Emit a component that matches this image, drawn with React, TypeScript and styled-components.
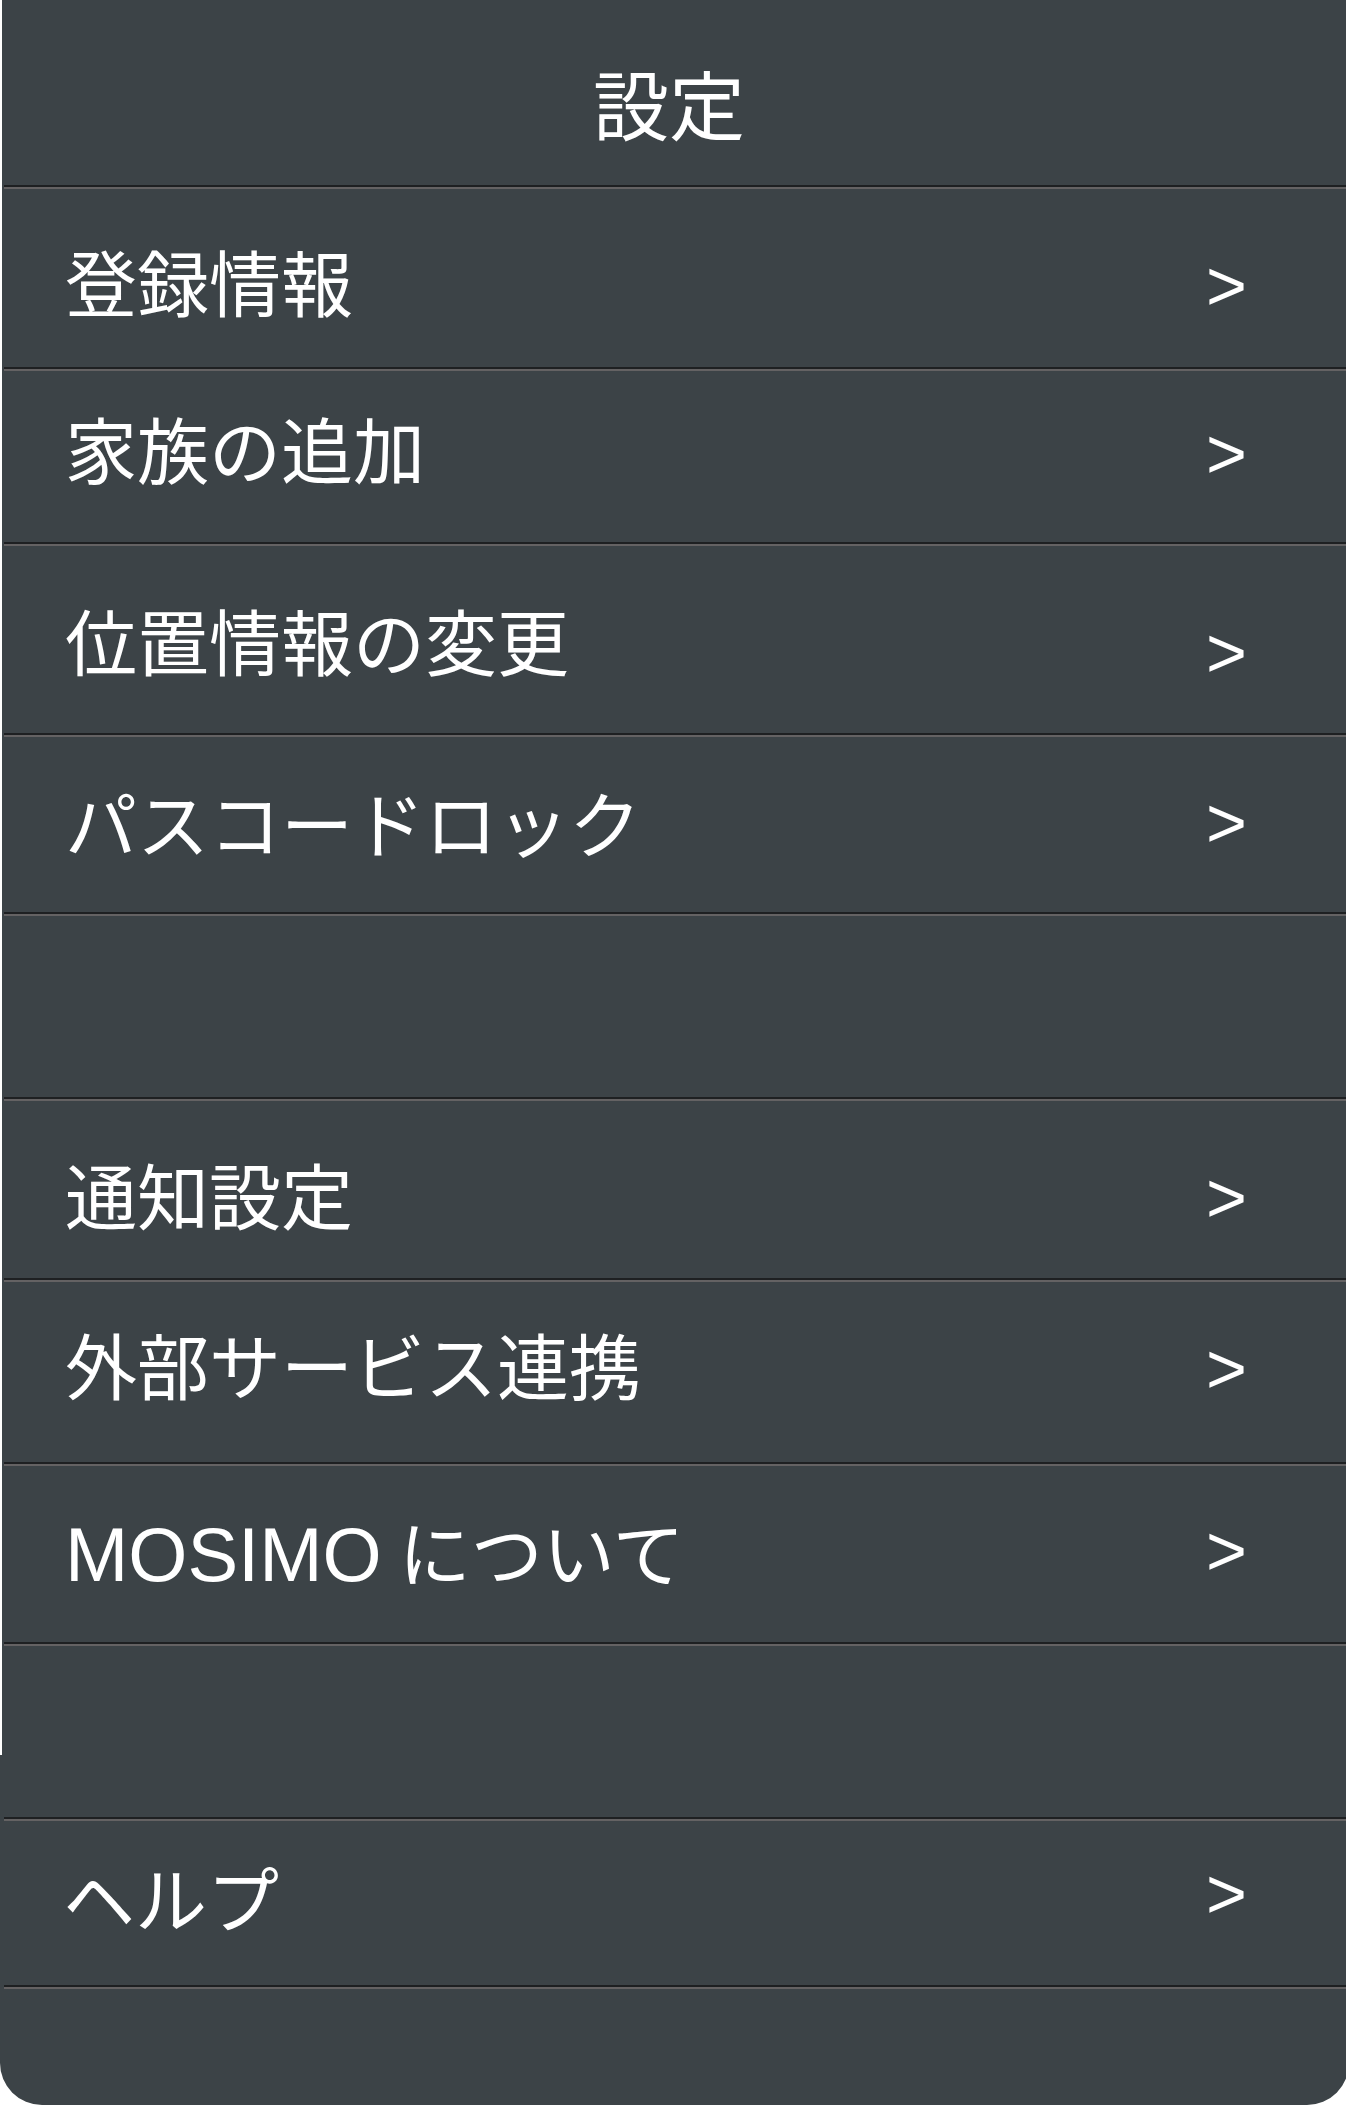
import React from "react";
import styled, { createGlobalStyle } from "styled-components";

const GlobalStyle = createGlobalStyle`
  html, body {
    margin: 0;
    padding: 0;
    background: #ffffff;
    overflow: hidden;
  }
  body {
    font-family: "Liberation Sans", "Noto Sans CJK JP", sans-serif;
  }
`;

const BG = "#3c4347";

const Page = styled.div`
  width: 1346px;
  display: flex;
  flex-direction: column;
`;

const Sheet = styled.div`
  margin-left: 2px;
  background: ${BG};
  display: flex;
  flex-direction: column;
`;

const Tail = styled.div`
  margin-right: -3px;
  padding-right: 3px;
  background: ${BG};
  border-radius: 0 0 42px 42px;
  display: flex;
  flex-direction: column;
`;

const Header = styled.div`
  height: 185px;
  box-sizing: border-box;
  padding: 18px 10px 0 0;
  display: flex;
  align-items: center;
  justify-content: center;
  color: #ffffff;
  font-family: "Noto Sans CJK JP", sans-serif;
  font-size: 76px;
  line-height: 1;
  font-weight: 400;
`;

const Divider = styled.div<{ $inset: number }>`
  margin-left: ${(p) => p.$inset}px;
  height: 4px;
  box-sizing: border-box;
  border-top: 2px solid #1e2022;
  border-bottom: 2px solid #646263;
`;

const Row = styled.div<{ $h: number; $shift: number }>`
  height: ${(p) => p.$h}px;
  box-sizing: border-box;
  padding: ${(p) => Math.max(0, p.$shift * 2)}px 99px
    ${(p) => Math.max(0, -p.$shift * 2)}px 63px;
  display: flex;
  align-items: center;
  justify-content: space-between;
  color: #ffffff;
`;

const Label = styled.span`
  font-family: "Liberation Sans", "Noto Sans CJK JP", sans-serif;
  font-size: 72px;
  line-height: 1;
  font-weight: 400;
  white-space: nowrap;
`;

const Latin = styled.span`
  font-family: "Liberation Sans", sans-serif;
  font-size: 76px;
  margin-right: -3px;
`;

const Chevron = styled.span<{ $dy: number }>`
  font-family: "Liberation Sans", sans-serif;
  font-size: 70px;
  line-height: 1;
  margin-top: ${(p) => Math.max(0, p.$dy * 2)}px;
  margin-bottom: ${(p) => Math.max(0, -p.$dy * 2)}px;
`;

const Blank = styled.div<{ $h: number }>`
  height: ${(p) => p.$h}px;
`;

type Item = {
  label: React.ReactNode;
  key: string;
  h: number;
  shift: number;
  dy: number;
};

const group1: Item[] = [
  { key: "a", label: "登録情報", h: 178, shift: 8, dy: 0 },
  { key: "b", label: "家族の追加", h: 171, shift: -4, dy: 1 },
  { key: "c", label: "位置情報の変更", h: 187, shift: 5, dy: 8 },
  { key: "d", label: "パスコードロック", h: 175, shift: 2, dy: -4 },
];

const group2: Item[] = [
  { key: "e", label: "通知設定", h: 177, shift: 9, dy: -1 },
  { key: "f", label: "外部サービス連携", h: 180, shift: -3, dy: 0 },
  {
    key: "g",
    label: (
      <>
        <Latin>MOSIMO</Latin> について
      </>
    ),
    h: 176,
    shift: 1,
    dy: -4,
  },
];

const MenuRow = ({ item }: { item: Item }) => (
  <Row $h={item.h} $shift={item.shift}>
    <Label>{item.label}</Label>
    <Chevron $dy={item.dy}>&gt;</Chevron>
  </Row>
);

export default function App() {
  return (
    <>
      <GlobalStyle />
      <Page>
        <Sheet>
          <Header>設定</Header>
          {group1.map((it) => (
            <React.Fragment key={it.key}>
              <Divider $inset={2} />
              <MenuRow item={it} />
            </React.Fragment>
          ))}
          <Divider $inset={2} />
          <Blank $h={181} />
          {group2.map((it) => (
            <React.Fragment key={it.key}>
              <Divider $inset={2} />
              <MenuRow item={it} />
            </React.Fragment>
          ))}
          <Divider $inset={2} />
          <Blank $h={109} />
        </Sheet>
        <Tail>
          <Blank $h={62} />
          <Divider $inset={4} />
          <MenuRow
            item={{ key: "h", label: "ヘルプ", h: 164, shift: -1, dy: -8 }}
          />
          <Divider $inset={4} />
          <Blank $h={116} />
        </Tail>
      </Page>
    </>
  );
}
